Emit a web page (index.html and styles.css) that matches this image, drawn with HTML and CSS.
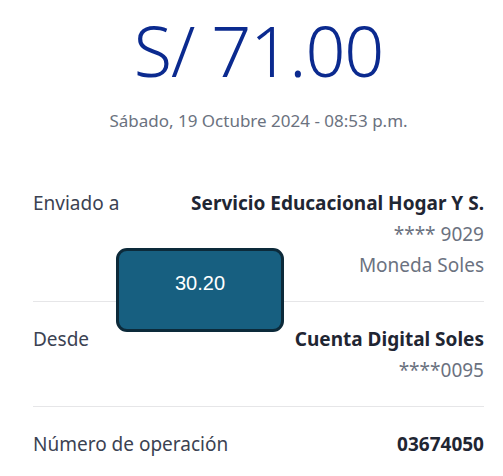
FILE: index.html
```html
<!DOCTYPE html>
<html lang="es">
<head>
<meta charset="utf-8">
<link rel="stylesheet" href="styles.css">
</head>
<body>
<main class="receipt">
  <header class="head">
    <div class="amount">S/ 71.00</div>
    <div class="date">Sábado, 19 Octubre 2024 - 08:53 p.m.</div>
  </header>
  <section class="row">
    <div class="label">Enviado a</div>
    <div class="values">
      <div class="strong">Servicio Educacional Hogar Y S.</div>
      <div class="sub">**** 9029</div>
      <div class="sub">Moneda Soles</div>
    </div>
  </section>
  <section class="row">
    <div class="label">Desde</div>
    <div class="values">
      <div class="strong">Cuenta Digital Soles</div>
      <div class="sub">****0095</div>
    </div>
  </section>
  <section class="row last">
    <div class="label">Número de operación</div>
    <div class="values">
      <div class="strong">03674050</div>
    </div>
  </section>
</main>
<div class="bubble">30.20</div>
</body>
</html>
```

FILE: styles.css
```css
html, body {
  margin: 0;
  padding: 0;
  background: #ffffff;
}
body {
  font-family: "Noto Sans", "DejaVu Sans", sans-serif;
  width: 503px;
  height: 476px;
  overflow: hidden;
  position: relative;
}
.receipt {
  margin: 0 19px 0 33px;
}
.head {
  display: flex;
  flex-direction: column;
  align-items: center;
  padding-top: 10px;
}
.amount {
  font-size: 70px;
  font-weight: 300;
  line-height: 80px;
  color: #0b2a8f;
  letter-spacing: -1px;
}
.date {
  margin-top: 19px;
  font-size: 17px;
  line-height: 24px;
  color: #6b7280;
}
.row {
  display: flex;
  justify-content: space-between;
  padding: 22px 0 20px;
  border-bottom: 1px solid #e6e6e8;
  font-size: 19px;
  line-height: 31px;
}
.row:first-of-type {
  margin-top: 33px;
}
.row.last {
  border-bottom: none;
}
.label {
  color: #3b4252;
}
.values {
  text-align: right;
}
.strong {
  font-weight: 700;
  color: #1f2633;
}
.sub {
  color: #6b7280;
}
.bubble {
  position: absolute;
  left: 116px;
  top: 248px;
  width: 162px;
  height: 78px;
  box-sizing: content-box;
  border: 3px solid #0c2a3a;
  border-radius: 11px;
  background: #175f80;
  color: #ffffff;
  font-family: "Liberation Sans", Arial, sans-serif;
  font-size: 20px;
  display: flex;
  justify-content: center;
  line-height: 64px;
}
```
